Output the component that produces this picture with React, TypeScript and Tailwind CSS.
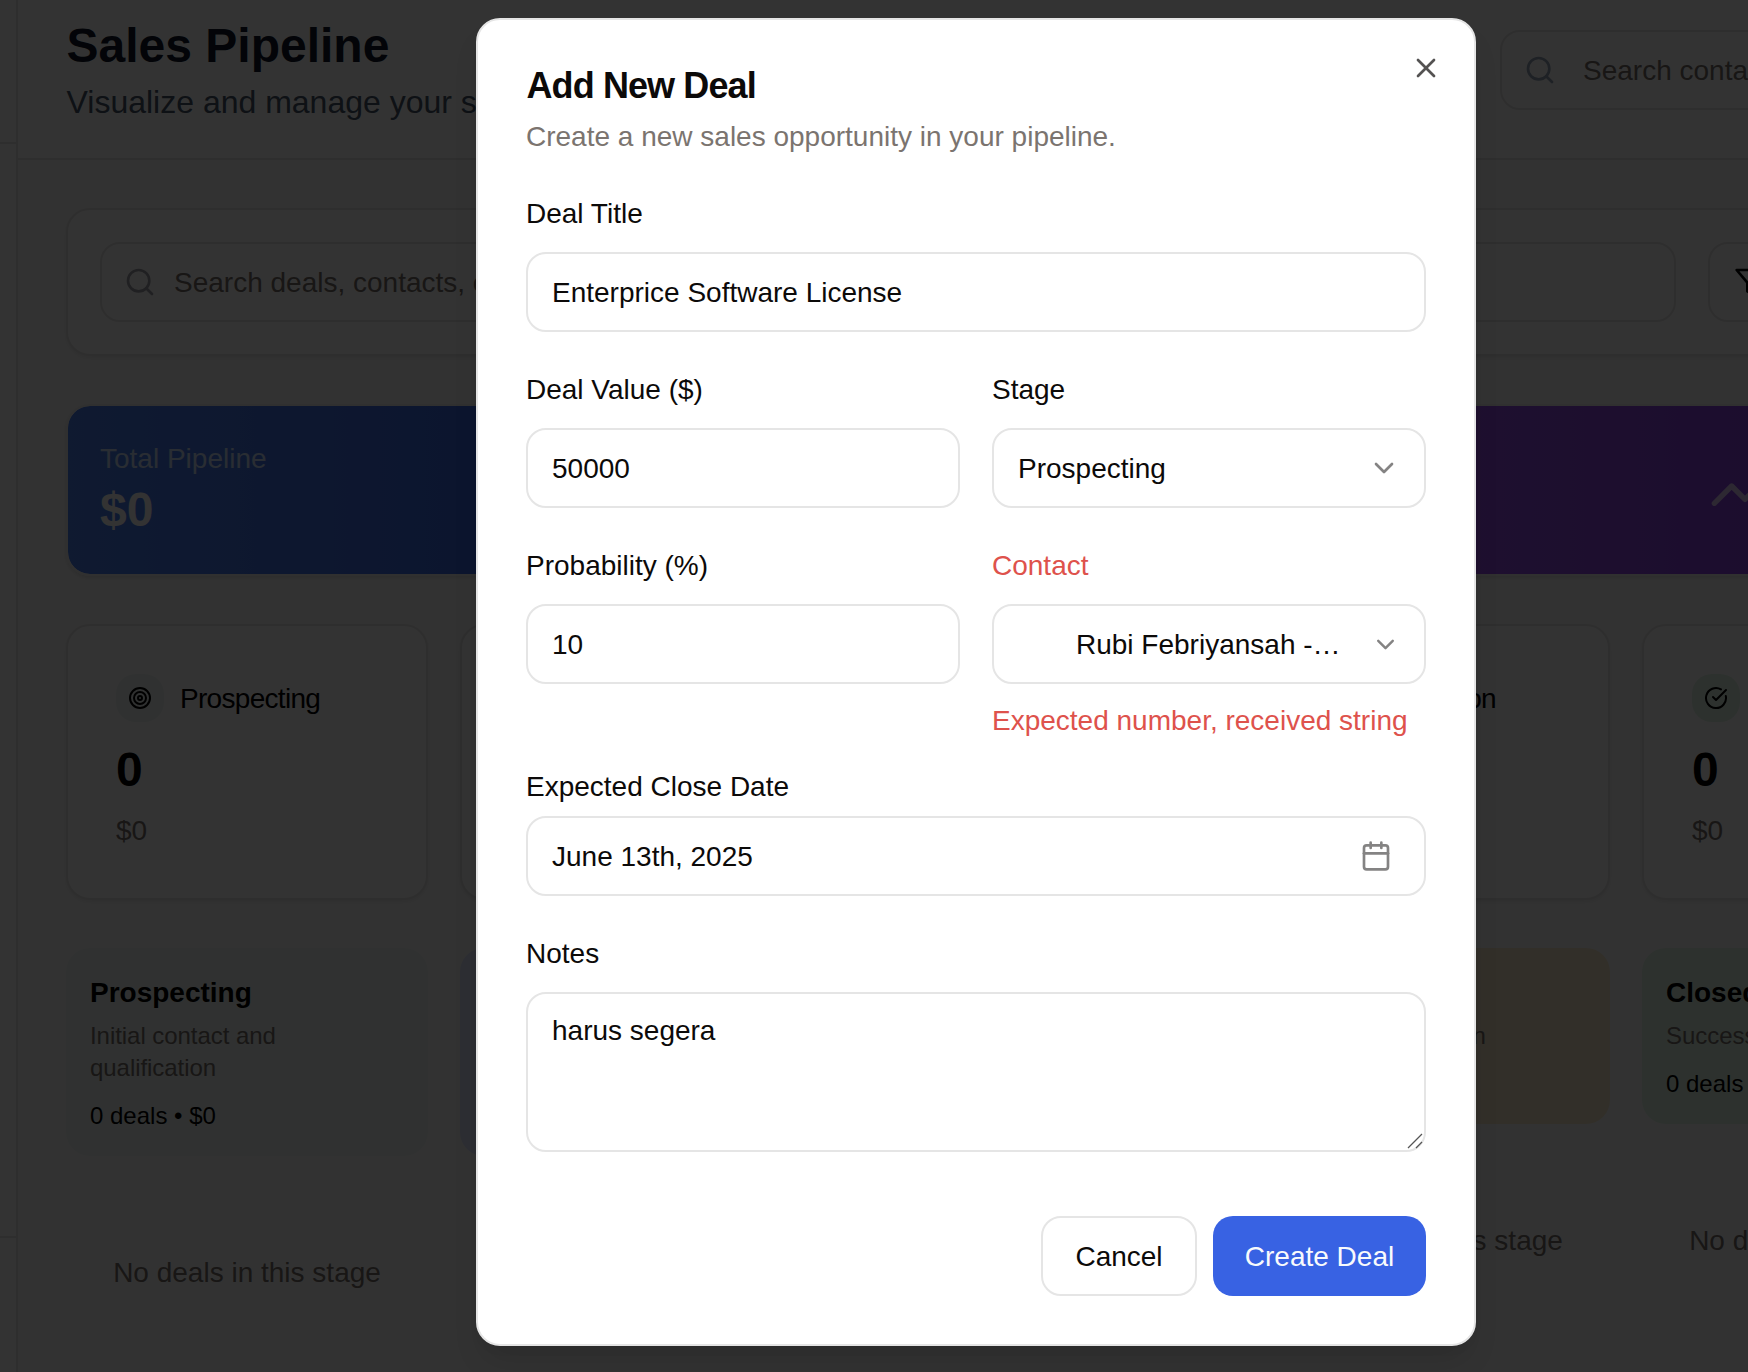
import type { ReactNode } from "react";
import { Calendar, ChevronDown, CircleCheckBig, Search, Target, TrendingUp, X } from "lucide-react";

type Tone = "mist" | "blue" | "violet" | "amber" | "green" | "red";

const TONES: Record<Tone, string> = {
  mist: "bg-[#eff6f3]",
  blue: "bg-[#dee3fd]",
  violet: "bg-[#ede3fb]",
  amber: "bg-[#faebcd]",
  green: "bg-[#e1f5e6]",
  red: "bg-[#fbe3e2]",
};

// Body text: a 40px line whose glyphs sit one pixel below the centre.
const BODY = "-mb-[2px] text-[28px] leading-[42px]";

const STAGES: { name: string; description: string; tone: Tone; icon: typeof Target }[] = [
  { name: "Prospecting", description: "Initial contact and qualification", tone: "mist", icon: Target },
  { name: "Qualification", description: "Needs assessment and budget", tone: "blue", icon: Target },
  { name: "Proposal", description: "Proposal sent", tone: "violet", icon: Target },
  { name: "Negotiation", description: "Contract negotiation", tone: "amber", icon: Target },
  { name: "Closed Won", description: "Successfully closed", tone: "green", icon: CircleCheckBig },
  { name: "Closed Lost", description: "Deal lost", tone: "red", icon: X },
];

function FilterIcon() {
  return (
    <svg className="size-8 shrink-0" viewBox="0 0 24 24" fill="none" stroke="currentColor" strokeWidth="2" strokeLinecap="round" strokeLinejoin="round">
      <polygon points="22 3 2 3 10 12.46 10 19 14 21 14 12.46 22 3" />
    </svg>
  );
}

function Pipeline() {
  return (
    <div className="flex h-full w-[2446px]">
      <aside className="flex w-[18px] shrink-0 flex-col border-r-2 border-[#e7e5e4] bg-white">
        <div className="h-[144px] border-b-2 border-[#e7e5e4]" />
        <div className="h-[1092px]" />
        <div className="flex-1 border-t-2 border-[#e7e5e4]" />
      </aside>
      <main className="flex flex-1 flex-col bg-[#fbfbfb]">
        <header className="flex h-[160px] justify-between border-b-2 border-[#e7e5e4] bg-white px-12 pt-[14px]">
          <div className="pl-[0.5px]">
            <h1 className="text-[48px] leading-[64px] font-bold text-[#0f172a]">Sales Pipeline</h1>
            <p className="text-[32px] leading-[48px] text-[#475569]">Visualize and manage your sales</p>
          </div>
          <div className="w-[898px] pt-4">
            <div className="flex h-20 w-[512px] items-center gap-[27px] rounded-[20px] border-2 border-[#e7e5e4] pl-[22px]">
              <Search className="size-8 shrink-0 text-[#94a3b8]" />
              <span className={`${BODY} text-[#78716c]`}>Search contacts</span>
            </div>
          </div>
        </header>

        <div className="flex flex-col gap-12 p-12">
          <section className="flex gap-8 rounded-[24px] border-2 border-[#e7e5e4] bg-white p-8 shadow-[0_2px_4px_rgba(0,0,0,0.08)]">
            <div className="flex h-20 flex-1 items-center gap-[18px] rounded-[20px] border-2 border-[#e7e5e4] pl-[22px]">
              <Search className="size-8 shrink-0 text-[#a1a1aa]" />
              <span className={`${BODY} text-[#78716c]`}>Search deals, contacts, or companies</span>
            </div>
            <div className="w-[656px]">
              <button className="flex h-20 w-[180px] items-center rounded-[20px] border-2 border-[#e7e5e4] px-6">
                <FilterIcon />
              </button>
            </div>
          </section>

          <section className="grid grid-cols-4 gap-8">
            <div className="rounded-[24px] border-2 border-[#f0efee] bg-linear-to-r from-[#4b80f0] to-[#3862e3] bg-clip-padding p-8 text-white shadow-[0_2px_4px_rgba(0,0,0,0.12)]">
              <p className={`${BODY} text-[#dbeafe] opacity-90`}>Total Pipeline</p>
              <p className="text-[48px] leading-[64px] font-bold">$0</p>
            </div>
            <div className="rounded-[24px] bg-linear-to-r from-[#4fc47f] to-[#3a9c5c]" />
            <div className="flex items-center justify-end rounded-[24px] border-2 border-[#f0efee] bg-linear-to-r from-[#9d5aef] to-[#893de1] bg-clip-padding p-8 shadow-[0_2px_4px_rgba(0,0,0,0.12)]">
              <TrendingUp className="size-16 text-[#f3e8ff] opacity-80" />
            </div>
            <div className="rounded-[24px] bg-linear-to-r from-[#f08a4b] to-[#e36b38]" />
          </section>

          <section className="grid grid-cols-6 gap-8">
            {STAGES.map(({ name, tone, icon: Icon }) => (
              <div key={name} className="rounded-[24px] border-2 border-[#e7e5e4] bg-white p-12 shadow-[0_2px_4px_rgba(0,0,0,0.08)]">
                <div className="flex items-center gap-4">
                  <span className={`flex size-12 shrink-0 items-center justify-center rounded-[20px] ${TONES[tone]}`}>
                    <Icon className="size-6" />
                  </span>
                  <span className={`${BODY} tracking-[-0.025em]`}>{name}</span>
                </div>
                <p className="mt-4 text-[48px] leading-[64px] font-bold">0</p>
                <p className={`mt-2 ${BODY} text-[#78716c]`}>$0</p>
              </div>
            ))}
          </section>

          <section className="grid grid-cols-6 items-start gap-8">
            {STAGES.map(({ name, description, tone }) => (
              <div key={name}>
                <div className={`rounded-[24px] p-6 ${TONES[tone]}`}>
                  <h3 className={`${BODY} font-bold`}>{name}</h3>
                  <p className="mt-2 pr-16 text-[24px] leading-8 tracking-[-0.05px] text-[#78716c]">{description}</p>
                  <p className="mt-4 text-[24px] leading-8">0 deals • $0</p>
                </div>
                <p className={`pt-24 text-center ${BODY} text-[#78716c]`}>No deals in this stage</p>
              </div>
            ))}
          </section>
        </div>
      </main>
    </div>
  );
}

function Field({ label, error, children }: { label: string; error?: string; children: ReactNode }) {
  return (
    <div className="flex flex-col gap-4">
      <div className="h-12 text-[32px] leading-[48px]">
        <label className={error ? "text-[28px] text-[#de524c]" : "text-[28px]"}>{label}</label>
      </div>
      {children}
      {error && <p className={`${BODY} whitespace-nowrap text-[#de524c]`}>{error}</p>}
    </div>
  );
}

function TextInput({ value }: { value: string }) {
  return (
    <input
      readOnly
      value={value}
      className="h-20 w-full rounded-[20px] border-2 border-[#e5e5e5] bg-white px-6 pt-[2px] text-[28px] leading-10 outline-none"
    />
  );
}

function AddDealDialog() {
  return (
    <div role="dialog" className="relative flex h-[1328px] w-[1000px] flex-col rounded-[24px] border-2 border-[#e5e5e5] bg-white p-12 text-[#0c0a09] shadow-[0_20px_30px_-6px_rgba(0,0,0,0.1),0_8px_12px_-8px_rgba(0,0,0,0.1)]">
      <button className="absolute top-8 right-8 opacity-70">
        <X className="size-8" />
      </button>
      <h2 className="pl-[0.5px] text-[36px] leading-9 font-bold tracking-[-0.025em]">Add New Deal</h2>
      <p className={`mt-3 ${BODY} text-[#7b746f]`}>Create a new sales opportunity in your pipeline.</p>

      <form className="mt-8 flex flex-col gap-8">
        <Field label="Deal Title">
          <TextInput value="Enterprice Software License" />
        </Field>

        <div className="grid grid-cols-2 gap-8">
          <Field label="Deal Value ($)">
            <TextInput value="50000" />
          </Field>
          <Field label="Stage">
            <div className="flex h-20 items-center justify-between rounded-[20px] border-2 border-[#e5e5e5] px-6">
              <span className={BODY}>Prospecting</span>
              <ChevronDown className="size-8 opacity-50" />
            </div>
          </Field>
        </div>

        <div className="grid grid-cols-2 gap-8">
          <Field label="Probability (%)">
            <TextInput value="10" />
          </Field>
          <Field label="Contact" error="Expected number, received string">
            <div className="flex h-20 items-center justify-between rounded-[20px] border-2 border-[#e5e5e5] pr-6 pl-[82px]">
              <span className={BODY}>Rubi Febriyansah -…</span>
              <ChevronDown className="size-[29px] opacity-50" />
            </div>
          </Field>
        </div>

        <div className="flex flex-col gap-4">
          <label className="-mb-[2px] text-[28px] leading-[30px]">Expected Close Date</label>
          <div className="flex h-20 items-center justify-between rounded-[20px] border-2 border-[#e5e5e5] pr-8 pl-6">
            <span className={BODY}>June 13th, 2025</span>
            <Calendar className="size-8 opacity-50" />
          </div>
        </div>

        <Field label="Notes">
          <div className="relative flex">
            <textarea
              readOnly
              value="harus segera"
              className="h-40 w-full resize-none rounded-[20px] border-2 border-[#e5e5e5] bg-white px-6 pt-[17px] text-[28px] leading-10 outline-none"
            />
            <svg className="absolute right-[3px] bottom-[3px] size-4" viewBox="0 0 16 16" stroke="#555" strokeWidth="1.3" fill="none">
              <path d="M1 15 15 1M9 15l6-6" />
            </svg>
          </div>
        </Field>
      </form>

      <div className="mt-16 flex justify-end gap-4">
        <button className="h-20 w-[156px] rounded-[20px] border-2 border-[#e5e5e5] pt-[2px] text-[28px] leading-10">Cancel</button>
        <button className="h-20 w-[213px] rounded-[20px] bg-[#3862e3] pt-[2px] text-[28px] leading-10 text-[#f8fafc]">Create Deal</button>
      </div>
    </div>
  );
}

export default function App() {
  return (
    <div className="relative h-[1372px] w-[1748px] overflow-hidden bg-white font-['Liberation_Sans',Arial,sans-serif] text-black">
      <Pipeline />
      <div className="absolute inset-0 bg-black/80 pt-[18px] pl-[476px]">
        <AddDealDialog />
      </div>
    </div>
  );
}
